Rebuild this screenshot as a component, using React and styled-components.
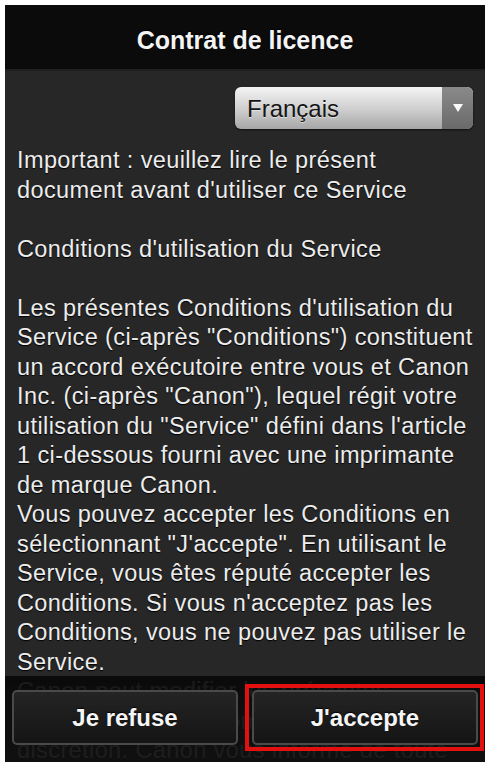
import React from 'react'
import styled, { createGlobalStyle } from 'styled-components'

const GlobalStyle = createGlobalStyle`
  html, body {
    margin: 0;
    padding: 0;
    background: #ffffff;
  }
  * {
    box-sizing: border-box;
  }
`

const Screen = styled.div`
  position: relative;
  margin: 5px 5px 0 5px;
  width: 480px;
  height: 757px;
  background: #272727;
  overflow: hidden;
  font-family: "Liberation Sans", Arial, sans-serif;
  display: flex;
  flex-direction: column;
`

const Header = styled.div`
  height: 66px;
  flex-shrink: 0;
  background: #0b0b0b;
  border-bottom: 2px solid #1f1f1f;
  display: flex;
  align-items: center;
  justify-content: center;
  padding-top: 6px;
`

const Title = styled.h1`
  margin: 0;
  color: #f4f4f4;
  font-size: 25px;
  font-weight: bold;
  text-shadow: 0 -1px 1px #000;
`

const Content = styled.div`
  flex: 1;
  padding: 16px 12px 0 12px;
  overflow: hidden;
`

const SelectRow = styled.div`
  display: flex;
  justify-content: flex-end;
`

const Select = styled.div`
  width: 238px;
  height: 42px;
  border-radius: 6px;
  display: flex;
  overflow: hidden;
  background: linear-gradient(#f4f4f4, #cdcdcd 55%, #a6a6a6);
  box-shadow: 0 1px 2px rgba(0,0,0,0.6);
`

const SelectLabel = styled.div`
  flex: 1;
  display: flex;
  align-items: center;
  padding-left: 12px;
  padding-top: 2px;
  font-size: 24px;
  color: #151515;
  text-shadow: 0 1px 0 rgba(255,255,255,0.5);
`

const SelectArrow = styled.div`
  width: 31px;
  background: linear-gradient(#8a8a8a, #6a6a6a);
  display: flex;
  align-items: center;
  justify-content: center;
`

const Terms = styled.div`
  margin-top: 17px;
  color: #ededed;
  font-size: 23.5px;
  line-height: 29.5px;
  letter-spacing: 0.4px;
  text-shadow: 0 1px 1px #000;
`

const Para = styled.p`
  margin: 0 0 ${p => (p.$gap ? '29.5px' : '0')} 0;
`

const Line = styled.span`
  display: block;
  white-space: nowrap;
`

const ButtonBar = styled.div`
  position: absolute;
  left: 0;
  right: 0;
  bottom: 0;
  height: 86px;
  background: linear-gradient(rgba(6,6,6,0.9), rgba(12,12,12,0.94) 25%, rgba(14,14,14,0.93));
  display: grid;
  grid-template-columns: 1fr 1fr;
  gap: 14px;
  padding: 14px 7px 17px 7px;
`

const Button = styled.div`
  position: relative;
  display: flex;
  align-items: center;
  justify-content: center;
  border: 2px solid #4a4a4a;
  border-radius: 5px;
  background: linear-gradient(#242424, #151515);
  color: #f6f6f6;
  font-size: 24px;
  font-weight: bold;
  text-shadow: 0 -1px 1px #000;
`

const Highlight = styled.div`
  position: absolute;
  top: -8px;
  left: -9px;
  right: -8px;
  bottom: -8px;
  border: 4px solid #e31010;
  pointer-events: none;
`

const lines = (arr) => arr.map((t, i) => <Line key={i}>{t}</Line>)

export default function App() {
  return (
    <>
      <GlobalStyle />
      <Screen>
        <Header>
          <Title>Contrat de licence</Title>
        </Header>
        <Content>
          <SelectRow>
            <Select>
              <SelectLabel>Français</SelectLabel>
              <SelectArrow>
                <svg width="12" height="10" viewBox="0 0 12 10">
                  <path d="M1 1 L11 1 L6 9 Z" fill="#fafafa" />
                </svg>
              </SelectArrow>
            </Select>
          </SelectRow>
          <Terms>
            <Para $gap>
              {lines([
                'Important : veuillez lire le présent',
                "document avant d'utiliser ce Service",
              ])}
            </Para>
            <Para $gap>{lines(["Conditions d'utilisation du Service"])}</Para>
            <Para>
              {lines([
                "Les présentes Conditions d'utilisation du",
                'Service (ci-après "Conditions") constituent',
                'un accord exécutoire entre vous et Canon',
                'Inc. (ci-après "Canon"), lequel régit votre',
                'utilisation du "Service" défini dans l\'article',
                '1 ci-dessous fourni avec une imprimante',
                'de marque Canon.',
              ])}
            </Para>
            <Para>
              {lines([
                'Vous pouvez accepter les Conditions en',
                'sélectionnant "J\'accepte". En utilisant le',
                'Service, vous êtes réputé accepter les',
                "Conditions. Si vous n'acceptez pas les",
                'Conditions, vous ne pouvez pas utiliser le',
                'Service.',
              ])}
            </Para>
            <Para>
              {lines([
                'Canon peut modifier les présentes',
                'Conditions à tout moment et à sa seule',
                'discrétion. Canon vous informe de toute',
              ])}
            </Para>
          </Terms>
        </Content>
        <ButtonBar>
          <Button>Je refuse</Button>
          <Button>
            J'accepte
            <Highlight />
          </Button>
        </ButtonBar>
      </Screen>
    </>
  )
}
